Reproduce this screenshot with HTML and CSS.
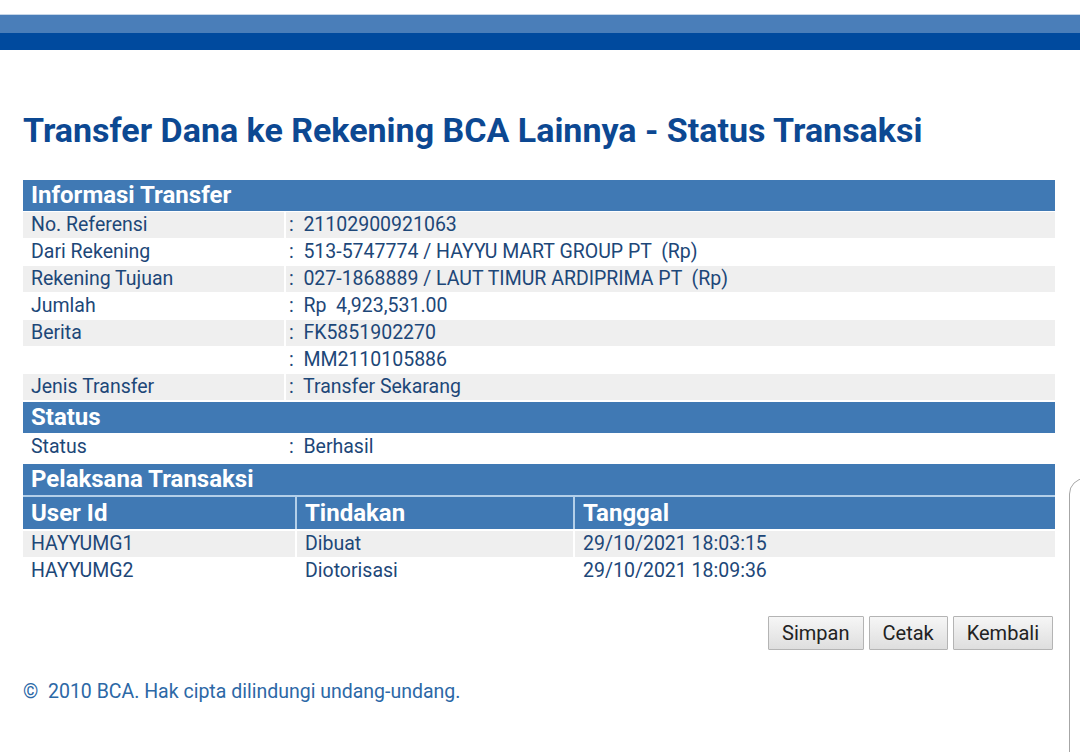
FILE: index.html
```html
<!doctype html>
<html>
    <head>
        <meta charset="utf-8" />
        <meta name="viewport" content="width=device-width" />
        <title>Status Transaksi</title>
        <link rel="stylesheet" href="styles.css">
    </head>
    <body>
        <div class="topbar">
            <div class="topbar_light"></div>
            <div class="topbar_dark"></div>
        </div>
        <div class="content">
            <h1>Transfer Dana ke Rekening BCA Lainnya - Status Transaksi</h1>
            <table class="info">
                <tr class="head"><th colspan="2">Informasi Transfer</th></tr>
                <tr class="odd"><td class="label">No. Referensi</td><td class="value">:&nbsp; 21102900921063</td></tr>
                <tr><td class="label">Dari Rekening</td><td class="value">:&nbsp; 513-5747774 / HAYYU MART GROUP PT &nbsp;(Rp)</td></tr>
                <tr class="odd"><td class="label">Rekening Tujuan</td><td class="value">:&nbsp; 027-1868889 / LAUT TIMUR ARDIPRIMA PT &nbsp;(Rp)</td></tr>
                <tr><td class="label">Jumlah</td><td class="value">:&nbsp; Rp &nbsp;4,923,531.00</td></tr>
                <tr class="odd"><td class="label">Berita</td><td class="value">:&nbsp; FK5851902270</td></tr>
                <tr><td class="label"></td><td class="value">:&nbsp; MM2110105886</td></tr>
                <tr class="odd"><td class="label">Jenis Transfer</td><td class="value">:&nbsp; Transfer Sekarang</td></tr>
                <tr class="head status"><th colspan="2">Status</th></tr>
                <tr><td class="label">Status</td><td class="value">:&nbsp; Berhasil</td></tr>
            </table>
            <table class="actor">
                <tr class="head"><th colspan="3">Pelaksana Transaksi</th></tr>
                <tr class="cols">
                    <th class="c1">User Id</th>
                    <th class="c2">Tindakan</th>
                    <th>Tanggal</th>
                </tr>
                <tr class="odd"><td>HAYYUMG1</td><td>Dibuat</td><td>29/10/2021 18:03:15</td></tr>
                <tr><td>HAYYUMG2</td><td>Diotorisasi</td><td>29/10/2021 18:09:36</td></tr>
            </table>
            <div class="buttons">
                <button>Simpan</button>
                <button>Cetak</button>
                <button>Kembali</button>
            </div>
            <p class="footer">&copy; &nbsp;2010 BCA. Hak cipta dilindungi undang-undang.</p>
        </div>
        <div class="edge"></div>
    </body>
</html>
```

FILE: styles.css
```css
body {
    margin: 0;
    font-family: Roboto, "Liberation Sans", sans-serif;
    color: #1d4778;
    background: #fff;
    overflow: hidden;
}
.topbar {
    padding-top: 14px;
}
.topbar_light {
    height: 18px;
    background: #4a7eb9;
    border-top: 1px solid #c6d6e8;
}
.topbar_dark {
    height: 17px;
    background: #004a9e;
}
.content {
    padding: 0 25px 0 23px;
}
h1 {
    margin: 60px 0 0;
    height: 70px;
    font-size: 34px;
    font-weight: bold;
    color: #0c4892;
    line-height: 40px;
}
table {
    width: 100%;
    border-collapse: collapse;
    font-size: 19.5px;
}
td,
th {
    padding: 0 0 0 8px;
    text-align: left;
    white-space: nowrap;
}
td {
    height: 26px;
    line-height: 26px;
    border-bottom: 1px solid #fff;
}
td.value {
    padding-left: 3px;
}
tr.odd td {
    background: #efefef;
}
.label {
    width: 253px;
    border-right: 2px solid #fff;
}
.head th,
.cols th {
    height: 31px;
    line-height: 31px;
    background: #4079b4;
    color: #fff;
    font-size: 24px;
}
.head th {
    border-bottom: 1px solid #fff;
}
.status th {
    border-top: 2px solid #fff;
}
.actor {
    margin-top: 3px;
}
.actor .head th {
    border-bottom: 2px solid #b3cfe9;
}
.cols th {
    height: 32px;
    border-bottom: 2px solid #fff;
}
.cols th.c1,
.cols th.c2 {
    border-right: 2px solid #b3cfe9;
}
.c1 {
    width: 264px;
}
.c2 {
    width: 268px;
}
.actor td:nth-child(1),
.actor td:nth-child(2) {
    border-right: 2px solid #fff;
}
.buttons {
    display: flex;
    justify-content: flex-end;
    gap: 5px;
    margin-top: 31px;
    padding-right: 2px;
}
button {
    height: 34px;
    padding: 0 13px;
    font-family: Roboto, "Liberation Sans", sans-serif;
    font-size: 20px;
    color: #222;
    background: linear-gradient(#f6f6f6, #dedede);
    border: 1px solid #b4b4b4;
    border-radius: 1px;
}
.footer {
    margin: 30px 0 0;
    font-size: 19.5px;
    color: #2c68a6;
}
.edge {
    position: fixed;
    left: 1069px;
    top: 478px;
    width: 40px;
    height: 320px;
    border: 1px solid #a6a6a6;
    border-radius: 16px 0 0 0;
}
```
